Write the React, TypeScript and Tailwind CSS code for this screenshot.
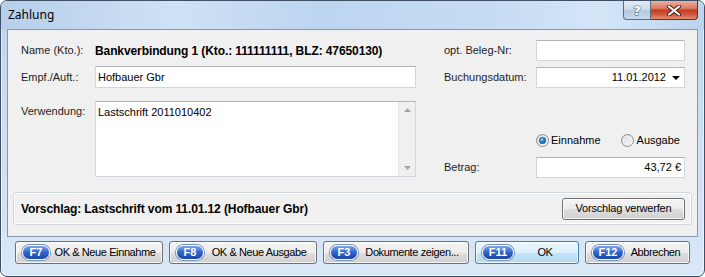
import React from "react";

function Field({ className, children }: { className: string; children?: React.ReactNode }) {
  return (
    <div className={`bg-white border border-[#d2d6dc] border-t-[#b0b4ba] ${className}`}>{children}</div>
  );
}

function Badge({ k, w }: { k: string; w: string }) {
  return (
    <span
      className={`flex items-center justify-center h-[15px] rounded-full border border-[#f6f9fd] bg-[linear-gradient(to_bottom,#7aa6ec,#2f63cc_50%,#1c47a8)] text-white font-bold text-[11px] leading-none shadow-[0_0_0_1px_#7d93b8] ${w}`}
    >
      {k}
    </span>
  );
}

function WinButton({
  className,
  children,
  primary,
}: {
  className: string;
  children: React.ReactNode;
  primary?: boolean;
}) {
  return (
    <div
      className={`rounded-[3px] border shadow-[inset_0_0_0_1px_rgba(255,255,255,0.75)] flex items-center ${
        primary
          ? "border-[#3c7fb1] bg-[linear-gradient(to_bottom,#ecf6fd_0%,#dcf0fc_50%,#c4e5fa_51%,#b2daf3_100%)]"
          : "border-[#707070] bg-[linear-gradient(to_bottom,#f4f4f4_0%,#ececec_50%,#dedede_51%,#d0d0d0_100%)]"
      } ${className}`}
    >
      {children}
    </div>
  );
}

function FButton({
  k,
  bw,
  w,
  label,
  primary,
}: {
  k: string;
  bw: string;
  w: string;
  label: string;
  primary?: boolean;
}) {
  return (
    <WinButton className={`h-[23px] pl-[6px] pr-[2px] ${w}`} primary={primary}>
      <Badge k={k} w={bw} />
      <span className="flex-1 text-center text-[11px] tracking-[-0.4px] leading-none">{label}</span>
    </WinButton>
  );
}

function Radio({ checked, id }: { checked?: boolean; id: string }) {
  return (
    <svg width="13" height="13" viewBox="0 0 13 13">
      <defs>
        <linearGradient id={`bg-${id}`} x1="0" y1="0" x2="1" y2="1">
          <stop offset="0" stopColor="#d6d6d6" />
          <stop offset="1" stopColor="#ffffff" />
        </linearGradient>
        <radialGradient id={`dot-${id}`} cx="0.4" cy="0.35" r="0.7">
          <stop offset="0" stopColor="#8fd0f7" />
          <stop offset="0.5" stopColor="#2a7fc8" />
          <stop offset="1" stopColor="#174f8e" />
        </radialGradient>
      </defs>
      <circle cx="6.5" cy="6.5" r="6" fill={`url(#bg-${id})`} stroke="#8a8c8e" />
      <circle cx="6.5" cy="6.5" r="4.3" fill="none" stroke="#eef0f2" strokeWidth="1" />
      {checked && <circle cx="6.5" cy="6.5" r="3.3" fill={`url(#dot-${id})`} stroke="#1c5b9c" strokeWidth="0.6" />}
    </svg>
  );
}

export default function App() {
  return (
    <div className="w-[705px] h-[277px] overflow-hidden rounded-[7px] border border-[#3f5064] bg-[linear-gradient(to_bottom,#bdd4ee,#cfe0f3_55%,#d9e7f6)] shadow-[inset_0_0_0_1px_rgba(255,255,255,0.6)] font-['Liberation_Sans',Arial,sans-serif] text-[11px] text-black">
      {/* Title bar */}
      <div className="h-[28px] flex items-start bg-[linear-gradient(to_right,#b6cfeb_0%,#cfe1f5_25%,#bcd5f0_45%,#c6dcf3_70%,#d4e5f7_85%,#bcd4ee_100%)]">
        <span className="ml-[7px] mt-[6px] font-['Noto_Sans',sans-serif] text-[12px] leading-[16px] text-black">
          Zahlung
        </span>
        <div className="ml-auto mr-[6px] flex">
          <div className="w-[28px] h-[19px] rounded-bl-[4px] border border-t-0 border-[#5b6b80] bg-[linear-gradient(to_bottom,#e4ecf5_0%,#ccd9e8_48%,#b4c6db_52%,#c8d9ec_100%)] flex items-center justify-center">
            <span className="font-['DejaVu_Sans',sans-serif] font-bold text-[13px] leading-none text-white [-webkit-text-stroke:1px_#4a596b] [paint-order:stroke_fill]">
              ?
            </span>
          </div>
          <div className="w-[47px] h-[19px] rounded-br-[4px] border border-l-0 border-t-0 border-[#6b2b20] bg-[linear-gradient(to_bottom,#eab1a3_0%,#dc7b63_40%,#c63d22_52%,#cf5a3e_75%,#e58d70_100%)] flex items-center justify-center">
            <svg width="16" height="11" viewBox="0 0 16 11">
              <path d="M3 1.5 L13 9.5 M13 1.5 L3 9.5" stroke="#4d1a10" strokeWidth="4" strokeLinecap="round" />
              <path d="M3 1.5 L13 9.5 M13 1.5 L3 9.5" stroke="#ffffff" strokeWidth="2.2" strokeLinecap="round" />
            </svg>
          </div>
        </div>
      </div>

      {/* Content panel */}
      <div className="mx-[6px] h-[208px] border border-[#8698ad] bg-[#f0f0f0] flex flex-col">
        <div className="flex pt-[10px] h-[148px]">
          {/* Left column */}
          <div className="ml-[13px] w-[395px] flex flex-col">
            <div className="h-[21px] flex items-center">
              <span className="w-[74px] text-[#1e1e1e]">Name (Kto.):</span>
              <span className="font-bold text-[12px] tracking-[-0.1px]">Bankverbindung 1 (Kto.: 111111111, BLZ: 47650130)</span>
            </div>
            <div className="mt-[5px] h-[22px] flex items-center">
              <span className="w-[74px] text-[#1e1e1e]">Empf./Auft.:</span>
              <Field className="w-[321px] h-full flex items-center pl-[2px]">Hofbauer Gbr</Field>
            </div>
            <div className="mt-[13px] flex items-start">
              <span className="w-[74px] pt-[2px] text-[#1e1e1e]">Verwendung:</span>
              <Field className="w-[321px] h-[76px] flex">
                <div className="flex-1 pl-[2px] pt-[2px]">Lastschrift 2011010402</div>
                <div className="w-[17px] h-full bg-[#f0f0f0] border-l border-[#e4e4e4] flex flex-col items-center justify-between py-[6px]">
                  <svg width="7" height="4" viewBox="0 0 7 4">
                    <polygon points="3.5,0 7,4 0,4" fill="#a5a5a5" />
                  </svg>
                  <svg width="7" height="4" viewBox="0 0 7 4">
                    <polygon points="0,0 7,0 3.5,4" fill="#a5a5a5" />
                  </svg>
                </div>
              </Field>
            </div>
          </div>

          {/* Right column */}
          <div className="ml-[28px] w-[241px] flex flex-col">
            <div className="h-[21px] flex items-center">
              <span className="w-[92px] text-[#1e1e1e]">opt. Beleg-Nr:</span>
              <Field className="w-[149px] h-full" />
            </div>
            <div className="mt-[6px] h-[21px] flex items-center">
              <span className="w-[92px] text-[#1e1e1e]">Buchungsdatum:</span>
              <Field className="w-[149px] h-full flex items-center justify-end">
                <span>11.01.2012</span>
                <svg className="ml-[6px] mr-[4px]" width="8" height="4" viewBox="0 0 8 4">
                  <polygon points="0,0 8,0 4,4" fill="#000" />
                </svg>
              </Field>
            </div>
            <div className="mt-[45px] h-[14px] flex items-center pl-[92px]">
              <Radio checked id="ein" />
              <span className="ml-[2px]">Einnahme</span>
              <span className="ml-[20px] flex items-center">
                <Radio id="aus" />
                <span className="ml-[3px]">Ausgabe</span>
              </span>
            </div>
            <div className="mt-[10px] h-[21px] flex items-center">
              <span className="w-[92px] text-[#1e1e1e]">Betrag:</span>
              <Field className="w-[149px] h-full flex items-center justify-end pr-[3px]">43,72 €</Field>
            </div>
          </div>
        </div>

        {/* Vorschlag group */}
        <div className="mt-[14px] mx-[5px] h-[33px] rounded-[3px] border border-[#d0d7dd] shadow-[inset_0_0_0_1px_#ffffff] flex items-center justify-between pl-[7px] pr-[6px]">
          <span className="font-bold text-[12px] tracking-[-0.1px]">Vorschlag: Lastschrift vom 11.01.12 (Hofbauer Gbr)</span>
          <WinButton className="w-[123px] h-[22px] justify-center">
            <span className="text-[11px] tracking-[-0.2px]">Vorschlag verwerfen</span>
          </WinButton>
        </div>
      </div>

      {/* Bottom buttons */}
      <div className="mt-[4px] pl-[14px] flex gap-[6px]">
        <FButton k="F7" bw="w-[28px]" w="w-[148px]" label="OK & Neue Einnahme" />
        <FButton k="F8" bw="w-[28px]" w="w-[148px]" label="OK & Neue Ausgabe" />
        <FButton k="F3" bw="w-[28px]" w="w-[146px]" label="Dokumente zeigen..." />
        <FButton k="F11" bw="w-[32px]" w="w-[104px]" label="OK" primary />
        <FButton k="F12" bw="w-[32px]" w="w-[105px]" label="Abbrechen" />
      </div>
    </div>
  );
}
